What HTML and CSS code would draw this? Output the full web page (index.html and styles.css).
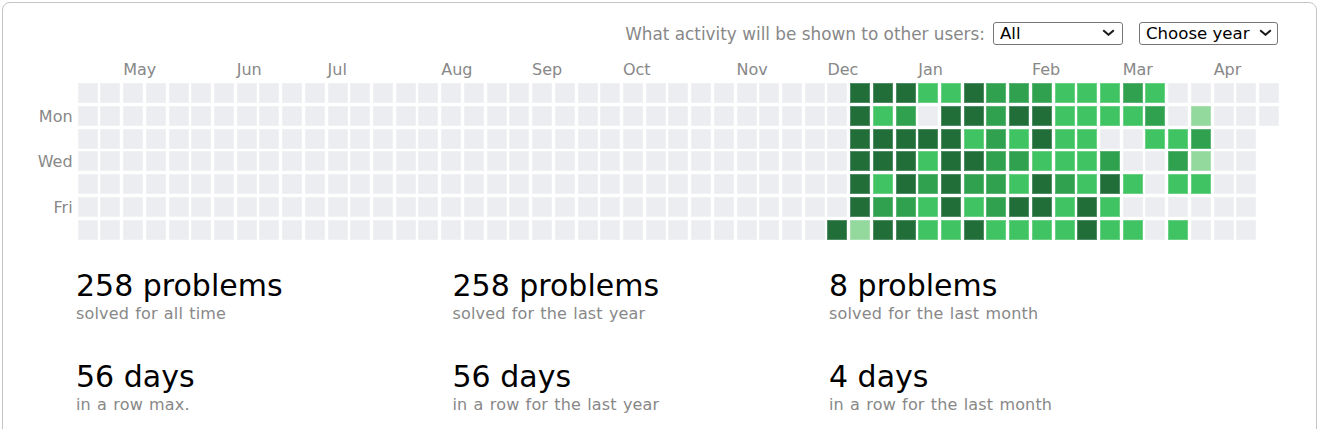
FILE: index.html
```html
<!DOCTYPE html>
<html lang="en">
<head>
<meta charset="utf-8">
<title>Activity</title>
<link rel="stylesheet" href="styles.css">
</head>
<body>
<section class="card">
  <div class="toolbar">
    <label class="toolbar-label" for="visibility">What activity will be shown to other users:</label>
    <span class="select-wrap select-wide">
      <select id="visibility" class="select"><option>All</option></select>
      <svg class="chevron" viewBox="0 0 13 7" aria-hidden="true"><path d="M1.2 1.2 L6.5 5.8 L11.8 1.2"/></svg>
    </span>
    <span class="select-wrap select-year">
      <select class="select"><option>Choose year</option></select>
      <svg class="chevron" viewBox="0 0 13 7" aria-hidden="true"><path d="M1.2 1.2 L6.5 5.8 L11.8 1.2"/></svg>
    </span>
  </div>

  <div class="calendar">
    <div class="months">
      <span style="grid-column: 3">May</span>
      <span style="grid-column: 8">Jun</span>
      <span style="grid-column: 12">Jul</span>
      <span style="grid-column: 17">Aug</span>
      <span style="grid-column: 21">Sep</span>
      <span style="grid-column: 25">Oct</span>
      <span style="grid-column: 30">Nov</span>
      <span style="grid-column: 34">Dec</span>
      <span style="grid-column: 38">Jan</span>
      <span style="grid-column: 43">Feb</span>
      <span style="grid-column: 47">Mar</span>
      <span style="grid-column: 51">Apr</span>
    </div>
    <div class="calendar-body">
      <div class="days">
        <span></span><span>Mon</span><span></span><span>Wed</span><span></span><span>Fri</span><span></span>
      </div>
      <div class="cells">
        <i></i><i></i><i></i><i></i><i></i><i></i><i></i>
        <i></i><i></i><i></i><i></i><i></i><i></i><i></i>
        <i></i><i></i><i></i><i></i><i></i><i></i><i></i>
        <i></i><i></i><i></i><i></i><i></i><i></i><i></i>
        <i></i><i></i><i></i><i></i><i></i><i></i><i></i>
        <i></i><i></i><i></i><i></i><i></i><i></i><i></i>
        <i></i><i></i><i></i><i></i><i></i><i></i><i></i>
        <i></i><i></i><i></i><i></i><i></i><i></i><i></i>
        <i></i><i></i><i></i><i></i><i></i><i></i><i></i>
        <i></i><i></i><i></i><i></i><i></i><i></i><i></i>
        <i></i><i></i><i></i><i></i><i></i><i></i><i></i>
        <i></i><i></i><i></i><i></i><i></i><i></i><i></i>
        <i></i><i></i><i></i><i></i><i></i><i></i><i></i>
        <i></i><i></i><i></i><i></i><i></i><i></i><i></i>
        <i></i><i></i><i></i><i></i><i></i><i></i><i></i>
        <i></i><i></i><i></i><i></i><i></i><i></i><i></i>
        <i></i><i></i><i></i><i></i><i></i><i></i><i></i>
        <i></i><i></i><i></i><i></i><i></i><i></i><i></i>
        <i></i><i></i><i></i><i></i><i></i><i></i><i></i>
        <i></i><i></i><i></i><i></i><i></i><i></i><i></i>
        <i></i><i></i><i></i><i></i><i></i><i></i><i></i>
        <i></i><i></i><i></i><i></i><i></i><i></i><i></i>
        <i></i><i></i><i></i><i></i><i></i><i></i><i></i>
        <i></i><i></i><i></i><i></i><i></i><i></i><i></i>
        <i></i><i></i><i></i><i></i><i></i><i></i><i></i>
        <i></i><i></i><i></i><i></i><i></i><i></i><i></i>
        <i></i><i></i><i></i><i></i><i></i><i></i><i></i>
        <i></i><i></i><i></i><i></i><i></i><i></i><i></i>
        <i></i><i></i><i></i><i></i><i></i><i></i><i></i>
        <i></i><i></i><i></i><i></i><i></i><i></i><i></i>
        <i></i><i></i><i></i><i></i><i></i><i></i><i></i>
        <i></i><i></i><i></i><i></i><i></i><i></i><i></i>
        <i></i><i></i><i></i><i></i><i></i><i></i><i></i>
        <i></i><i></i><i></i><i></i><i></i><i></i><i class="l4"></i>
        <i class="l4"></i><i class="l4"></i><i class="l4"></i><i class="l4"></i><i class="l4"></i><i class="l4"></i><i class="l1"></i>
        <i class="l4"></i><i class="l2"></i><i class="l4"></i><i class="l4"></i><i class="l2"></i><i class="l3"></i><i class="l4"></i>
        <i class="l4"></i><i class="l3"></i><i class="l4"></i><i class="l4"></i><i class="l4"></i><i class="l3"></i><i class="l4"></i>
        <i class="l2"></i><i></i><i class="l4"></i><i class="l2"></i><i class="l3"></i><i class="l2"></i><i class="l2"></i>
        <i class="l2"></i><i class="l4"></i><i class="l4"></i><i class="l4"></i><i class="l4"></i><i class="l4"></i><i class="l2"></i>
        <i class="l4"></i><i class="l4"></i><i class="l2"></i><i class="l4"></i><i class="l3"></i><i class="l2"></i><i class="l4"></i>
        <i class="l3"></i><i class="l3"></i><i class="l3"></i><i class="l3"></i><i class="l3"></i><i class="l3"></i><i class="l2"></i>
        <i class="l3"></i><i class="l4"></i><i class="l2"></i><i class="l3"></i><i class="l2"></i><i class="l4"></i><i class="l2"></i>
        <i class="l3"></i><i class="l4"></i><i class="l4"></i><i class="l2"></i><i class="l4"></i><i class="l4"></i><i class="l2"></i>
        <i class="l2"></i><i class="l2"></i><i class="l2"></i><i class="l2"></i><i class="l3"></i><i class="l2"></i><i class="l2"></i>
        <i class="l2"></i><i class="l2"></i><i class="l2"></i><i class="l2"></i><i class="l2"></i><i class="l4"></i><i class="l4"></i>
        <i class="l2"></i><i class="l2"></i><i></i><i class="l3"></i><i class="l4"></i><i class="l2"></i><i class="l2"></i>
        <i class="l3"></i><i class="l2"></i><i></i><i></i><i class="l2"></i><i></i><i class="l2"></i>
        <i class="l2"></i><i class="l3"></i><i class="l2"></i><i></i><i></i><i></i><i></i>
        <i></i><i></i><i class="l2"></i><i class="l3"></i><i class="l2"></i><i></i><i class="l2"></i>
        <i></i><i class="l1"></i><i class="l3"></i><i class="l1"></i><i class="l2"></i><i></i><i></i>
        <i></i><i></i><i></i><i></i><i></i><i></i><i></i>
        <i></i><i></i><i></i><i></i><i></i><i></i><i></i>
        <i></i><i></i>
      </div>
    </div>
  </div>

  <div class="stats">
    <div class="stat"><div class="stat-value">258 problems</div><div class="stat-caption">solved for all time</div></div>
    <div class="stat"><div class="stat-value">258 problems</div><div class="stat-caption">solved for the last year</div></div>
    <div class="stat"><div class="stat-value">8 problems</div><div class="stat-caption">solved for the last month</div></div>
    <div class="stat"><div class="stat-value">56 days</div><div class="stat-caption">in a row max.</div></div>
    <div class="stat"><div class="stat-value">56 days</div><div class="stat-caption">in a row for the last year</div></div>
    <div class="stat"><div class="stat-value">4 days</div><div class="stat-caption">in a row for the last month</div></div>
  </div>
</section>
</body>
</html>
```

FILE: styles.css
```css
* {
  box-sizing: border-box;
}

body {
  margin: 0;
  background: #ffffff;
  font-family: "DejaVu Sans", Verdana, sans-serif;
  font-size: 16px;
  color: #000000;
}

.card {
  margin: 2px 4px 20px 2px;
  border: 1px solid #c4c4c4;
  border-radius: 8px;
  padding: 19px 38px 40px 0;
}

.toolbar {
  display: flex;
  justify-content: flex-end;
  align-items: center;
  gap: 8px;
}

.toolbar-label {
  color: #888888;
  font-size: 16.85px;
}

.select-wrap {
  position: relative;
  display: inline-flex;
  height: 23px;
}

.select-wide {
  width: 130px;
}

.select-year {
  width: 139px;
  margin-left: 8px;
}

.select {
  appearance: none;
  -webkit-appearance: none;
  width: 100%;
  height: 23px;
  margin: 0;
  font-family: "DejaVu Sans", Verdana, sans-serif;
  font-size: 16.6px;
  line-height: 21px;
  color: #000000;
  background: #ffffff;
  border: 1px solid #767676;
  border-radius: 3px;
  padding: 0 0 0 6px;
}

.chevron {
  position: absolute;
  top: 7px;
  right: 8px;
  width: 13px;
  height: 7px;
  fill: none;
  stroke: #1a1a1a;
  stroke-width: 2;
  pointer-events: none;
}

.select-year .chevron {
  right: 6px;
}

.calendar {
  margin-top: 14.6px;
  padding-left: 74.7px;
}

.months {
  display: grid;
  grid-template-columns: repeat(53, 20px);
  column-gap: 2.73px;
  height: 19px;
  line-height: 19px;
  color: #888888;
  white-space: nowrap;
}

.months span {
  grid-row: 1;
}

.calendar-body {
  display: flex;
  margin-top: 4.7px;
  margin-left: -40px;
}

.days {
  width: 40px;
  display: grid;
  grid-template-rows: repeat(7, 20px);
  row-gap: 2.73px;
  line-height: 20px;
  color: #888888;
  text-align: right;
  padding-right: 6px;
  padding-top: 1px;
  flex: none;
}

.cells {
  display: grid;
  grid-template-rows: repeat(7, 20px);
  grid-auto-flow: column;
  grid-auto-columns: 20px;
  gap: 2.73px;
}

.cells i {
  display: block;
  width: 20px;
  height: 20px;
  background: #ebedf0;
  box-shadow: inset 0 0 0 1px rgba(255, 255, 255, 0.22);
}

.cells i.l1 { background: #93d99e; }
.cells i.l2 { background: #40c463; }
.cells i.l3 { background: #30a14e; }
.cells i.l4 { background: #216e39; }

.stats {
  display: grid;
  grid-template-columns: repeat(3, 376.5px);
  row-gap: 36.4px;
  margin-top: 27px;
  padding-left: 73px;
}

.stat-value {
  font-size: 30px;
  color: #000000;
}

.stat-caption {
  margin-top: 1px;
  font-size: 16px;
  letter-spacing: 0.15px;
  word-spacing: 1px;
  color: #888888;
}
```
